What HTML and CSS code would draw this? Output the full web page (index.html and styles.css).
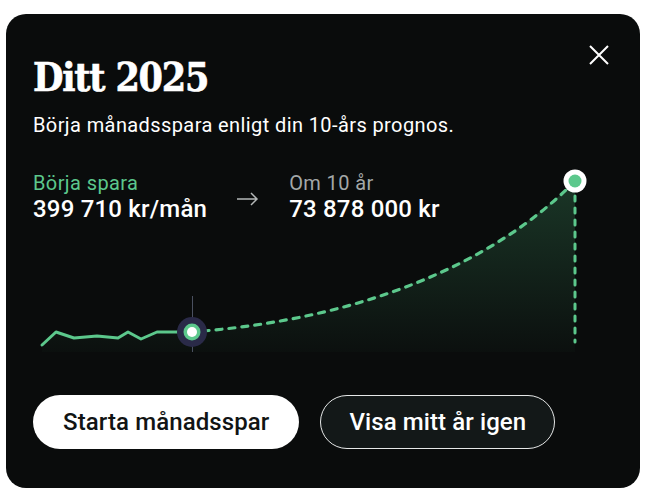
FILE: index.html
```html
<!DOCTYPE html>
<html>
  <head>
    <title>Ditt 2025</title>
    <link rel="stylesheet" href="styles.css">
  </head>
  <body>
    <div class="card">
      <!-- Projection chart, drawn in page coordinates -->
      <svg class="chart" viewBox="6 14 634 474" width="634" height="474">
        <defs>
          <linearGradient id="areaFill" x1="0" y1="181" x2="0" y2="352" gradientUnits="userSpaceOnUse">
            <stop offset="0" stop-color="#2e6a48" stop-opacity="0.45"/>
            <stop offset="1" stop-color="#2e6a48" stop-opacity="0.04"/>
          </linearGradient>
        </defs>
        <path d="M42,345 L56,332 L74,338 L97,336 L118,338 L128,332 L141,339 L157,332 L192,332 C360,318 490,265 575,181 L575,352 L42,352 Z" fill="url(#areaFill)"/>
        <line x1="192.5" y1="296" x2="192.5" y2="352" stroke="#4a5060" stroke-width="1"/>
        <polyline points="42,345 56,332 74,338 97,336 118,338 128,332 141,339 157,332 192,332" fill="none" stroke="#5cc88c" stroke-width="3" stroke-linejoin="round" stroke-linecap="round"/>
        <path d="M203,331 C360,318 490,265 570,186" fill="none" stroke="#5cc88c" stroke-width="3.2" stroke-dasharray="6 7" stroke-linecap="round"/>
        <line x1="575" y1="196" x2="575" y2="342" stroke="#5cc88c" stroke-width="3" stroke-dasharray="5 7" stroke-linecap="round"/>
        <circle cx="192" cy="332" r="15" fill="#2a2a48"/>
        <circle cx="192" cy="332" r="8.5" fill="#5cc88c"/>
        <circle cx="192" cy="332" r="5" fill="#ffffff"/>
        <circle cx="575" cy="181" r="11.5" fill="#ffffff"/>
        <circle cx="575" cy="181" r="6.5" fill="#5cc88c"/>
      </svg>

      <div class="card-head">
        <h1 class="title">Ditt 2025</h1>
        <button class="close-btn" aria-label="Stäng">
          <svg viewBox="0 0 20 20" width="20" height="20">
            <path d="M1,1 L19,19 M19,1 L1,19" stroke="#ffffff" stroke-width="2" fill="none"/>
          </svg>
        </button>
      </div>
      <p class="subtitle">Börja månadsspara enligt din 10-års prognos.</p>

      <div class="stats">
        <div class="stat">
          <div class="stat-label green">Börja spara</div>
          <div class="stat-value">399 710 kr/mån</div>
        </div>
        <svg class="arrow" viewBox="0 0 22 14" width="22" height="14">
          <path d="M0,7 L20,7 M14,1 L20,7 L14,13" stroke="#b4b8b8" stroke-width="1.5" fill="none"/>
        </svg>
        <div class="stat">
          <div class="stat-label grey">Om 10 år</div>
          <div class="stat-value">73 878 000 kr</div>
        </div>
      </div>

      <div class="actions">
        <button class="btn btn-primary">Starta månadsspar</button>
        <button class="btn btn-outline">Visa mitt år igen</button>
      </div>
    </div>
  </body>
</html>
```

FILE: styles.css
```css
body {
  margin: 0;
  background-color: #ffffff;
  font-family: Roboto, "Liberation Sans", sans-serif;
}
.card {
  position: relative;
  box-sizing: border-box;
  width: 634px;
  height: 474px;
  margin: 14px 0 0 6px;
  padding: 31px 31px 39px 27px;
  background-color: #0a0c0c;
  border-radius: 20px;
  display: flex;
  flex-direction: column;
  color: #ffffff;
}
.chart {
  position: absolute;
  left: 0;
  top: 0;
  pointer-events: none;
}
.card-head {
  position: relative;
  display: flex;
  justify-content: space-between;
  align-items: flex-start;
}
.title {
  margin: 8px 0 0 0;
  font-family: "DejaVu Serif Condensed", "DejaVu Serif", serif;
  font-stretch: condensed;
  font-weight: bold;
  font-size: 39px;
  line-height: 48px;
  letter-spacing: -1.2px;
  -webkit-text-stroke: 0.6px #ffffff;
}
.close-btn {
  background: none;
  border: none;
  padding: 0;
  width: 20px;
  height: 20px;
  cursor: pointer;
}
.subtitle {
  position: relative;
  margin: 12px 0 0 0;
  font-size: 20px;
  line-height: 24px;
  letter-spacing: 0.4px;
}
.stats {
  position: relative;
  display: flex;
  align-items: flex-start;
  gap: 31px 30px;
  margin-top: 34px;
}
.stat-label {
  font-size: 20px;
  line-height: 24px;
  letter-spacing: 0.4px;
}
.green {
  color: #5cc88c;
}
.grey {
  color: #a3a8a8;
}
.stat-value {
  font-size: 24px;
  font-weight: 500;
  line-height: 30px;
  letter-spacing: 0.2px;
  margin-top: -1px;
}
.arrow {
  margin-top: 21px;
}
.actions {
  position: relative;
  margin-top: auto;
  display: flex;
  gap: 21px;
}
.btn {
  height: 54px;
  border-radius: 27px;
  font-family: Roboto, "Liberation Sans", sans-serif;
  font-size: 24px;
  font-weight: 500;
  letter-spacing: 0.1px;
  padding: 0 30px;
  cursor: pointer;
}
.btn-primary {
  background-color: #ffffff;
  color: #111414;
  border: none;
}
.btn-outline {
  background-color: #131818;
  color: #ffffff;
  border: 1.5px solid #e6e8e8;
  padding: 0 28px;
}
```
